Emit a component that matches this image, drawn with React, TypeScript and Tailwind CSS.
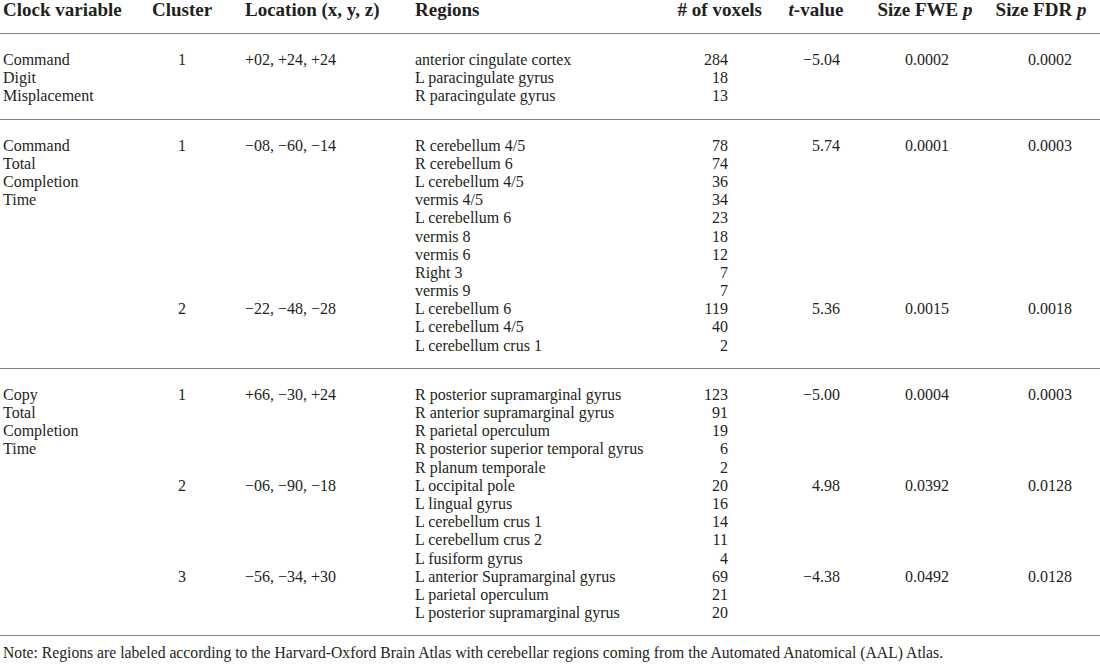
const rowCls =
  "grid grid-cols-[147px_64px_201px_257px_90px_108px_110px_120px] pl-[3px] leading-[18.2px] h-[18.2px]"

type Row = [string, string, string, string, string, string, string, string]

const groups: Row[][] = [
  [
    ["Command", "1", "+02, +24, +24", "anterior cingulate cortex", "284", "−5.04", "0.0002", "0.0002"],
    ["Digit", "", "", "L paracingulate gyrus", "18", "", "", ""],
    ["Misplacement", "", "", "R paracingulate gyrus", "13", "", "", ""],
  ],
  [
    ["Command", "1", "−08, −60, −14", "R cerebellum 4/5", "78", "5.74", "0.0001", "0.0003"],
    ["Total", "", "", "R cerebellum 6", "74", "", "", ""],
    ["Completion", "", "", "L cerebellum 4/5", "36", "", "", ""],
    ["Time", "", "", "vermis 4/5", "34", "", "", ""],
    ["", "", "", "L cerebellum 6", "23", "", "", ""],
    ["", "", "", "vermis 8", "18", "", "", ""],
    ["", "", "", "vermis 6", "12", "", "", ""],
    ["", "", "", "Right 3", "7", "", "", ""],
    ["", "", "", "vermis 9", "7", "", "", ""],
    ["", "2", "−22, −48, −28", "L cerebellum 6", "119", "5.36", "0.0015", "0.0018"],
    ["", "", "", "L cerebellum 4/5", "40", "", "", ""],
    ["", "", "", "L cerebellum crus 1", "2", "", "", ""],
  ],
  [
    ["Copy", "1", "+66, −30, +24", "R posterior supramarginal gyrus", "123", "−5.00", "0.0004", "0.0003"],
    ["Total", "", "", "R anterior supramarginal gyrus", "91", "", "", ""],
    ["Completion", "", "", "R parietal operculum", "19", "", "", ""],
    ["Time", "", "", "R posterior superior temporal gyrus", "6", "", "", ""],
    ["", "", "", "R planum temporale", "2", "", "", ""],
    ["", "2", "−06, −90, −18", "L occipital pole", "20", "4.98", "0.0392", "0.0128"],
    ["", "", "", "L lingual gyrus", "16", "", "", ""],
    ["", "", "", "L cerebellum crus 1", "14", "", "", ""],
    ["", "", "", "L cerebellum crus 2", "11", "", "", ""],
    ["", "", "", "L fusiform gyrus", "4", "", "", ""],
    ["", "3", "−56, −34, +30", "L anterior Supramarginal gyrus", "69", "−4.38", "0.0492", "0.0128"],
    ["", "", "", "L parietal operculum", "21", "", "", ""],
    ["", "", "", "L posterior supramarginal gyrus", "20", "", "", ""],
  ],
]

function DataRow({ r }: { r: Row }) {
  return (
    <div className={rowCls}>
      <div className="whitespace-nowrap">{r[0]}</div>
      <div className="text-center">{r[1]}</div>
      <div className="pl-[31px] whitespace-nowrap">{r[2]}</div>
      <div className="whitespace-nowrap">{r[3]}</div>
      <div className="text-right pr-[34px]">{r[4]}</div>
      <div className="text-right pr-[30px]">{r[5]}</div>
      <div className="text-center pl-[4px]">{r[6]}</div>
      <div className="text-center pl-[20px]">{r[7]}</div>
    </div>
  )
}

export default function App() {
  return (
    <div className="w-[1100px] h-[664px] bg-white text-[#231f20] font-['Liberation_Serif',serif] text-[16px] overflow-hidden">
      {/* header */}
      <div className="grid grid-cols-[147px_64px_201px_257px_90px_108px_110px_120px] pl-[3px] h-[34px] text-[19px] font-bold leading-[20px] border-b border-[#7f7f7f] whitespace-nowrap">
        <div>Clock variable</div>
        <div className="text-center">Cluster</div>
        <div className="pl-[31px]">Location (x, y, z)</div>
        <div>Regions</div>
        <div className="text-right">
          # of voxels
        </div>
        <div className="text-center">
          <span className="italic">t</span>-value
        </div>
        <div className="text-center">
          Size FWE <span className="italic">p</span>
        </div>
        <div className="text-center pl-[2px]">
          Size FDR <span className="italic">p</span>
        </div>
      </div>

      {groups.map((g, i) => (
        <div key={i} className="pt-[17px] pb-[13px] border-b border-[#7f7f7f]">
          {g.map((r, j) => (
            <DataRow key={j} r={r} />
          ))}
        </div>
      ))}

      <div className="pt-[8px] pl-[3px] leading-[18px] text-[15.7px] whitespace-nowrap">
        Note: Regions are labeled according to the Harvard-Oxford Brain Atlas with cerebellar regions coming from the
        Automated Anatomical (AAL) Atlas.
      </div>
    </div>
  )
}
